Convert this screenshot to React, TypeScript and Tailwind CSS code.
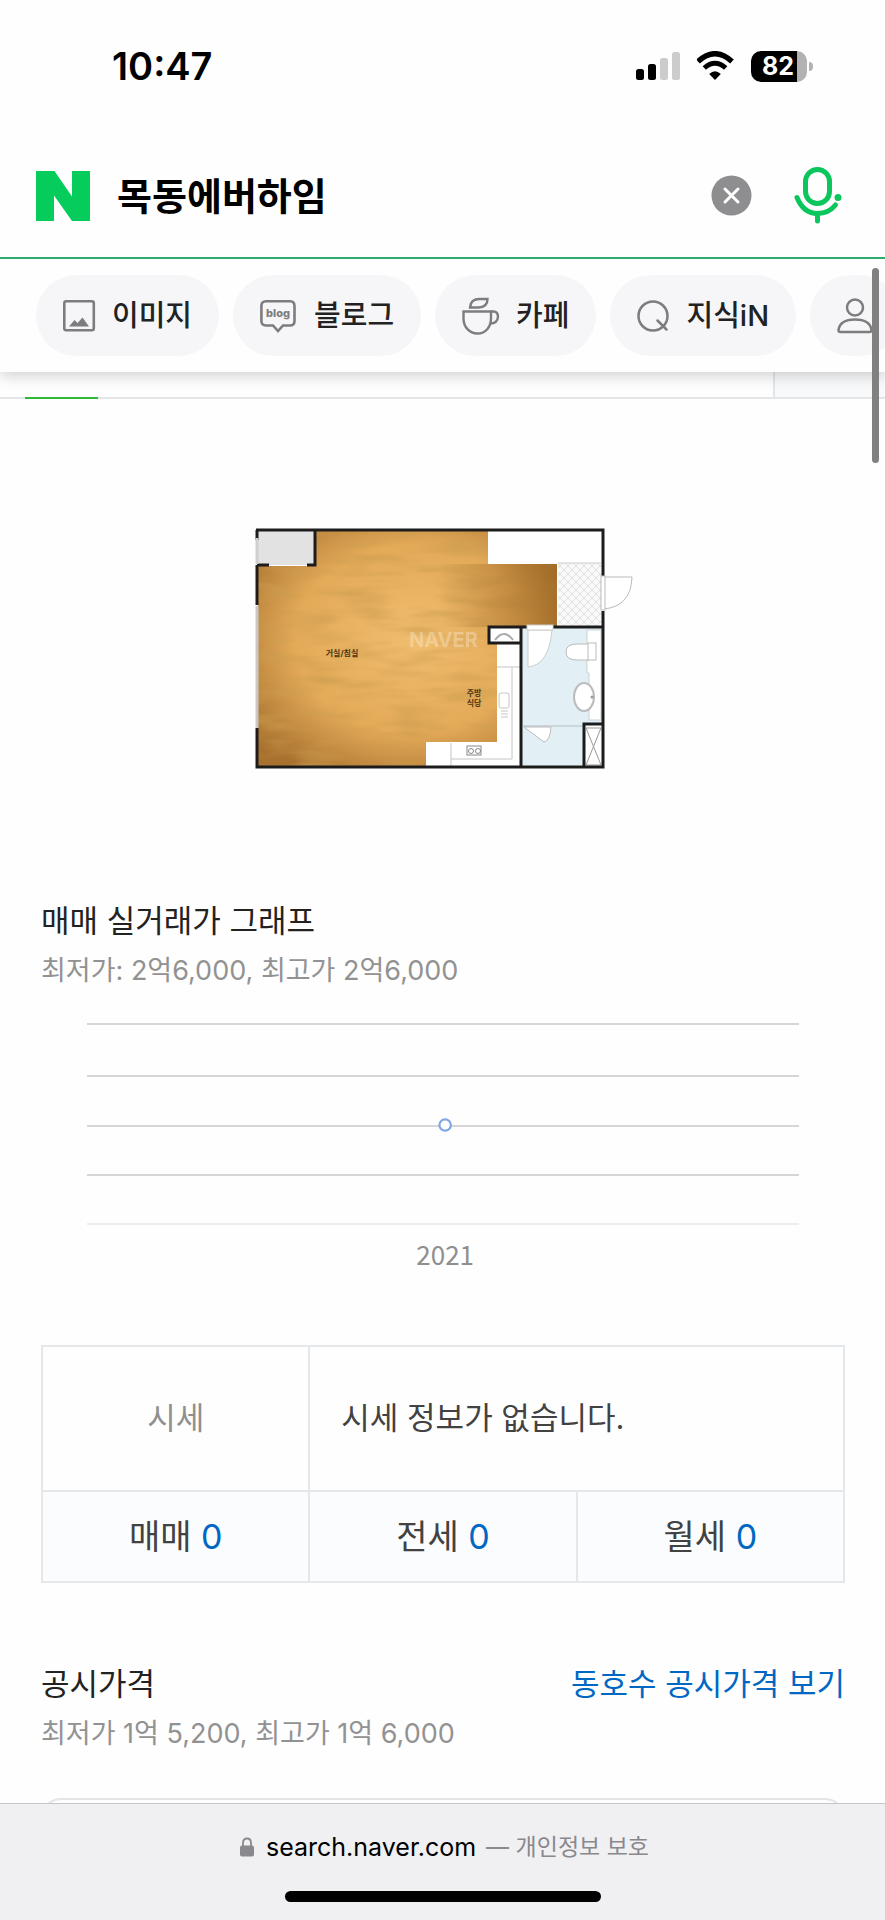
import type { ReactNode } from 'react'

const gridLines = [14, 66, 116, 165]

const deals = [
  { label: '매매', count: 0 },
  { label: '전세', count: 0 },
  { label: '월세', count: 0 },
]

const StatusBar = () => {
  return (
    <div className="flex h-[132px] items-center justify-between pr-[72px] pl-[112px]">
      <span className="text-[38px] leading-none font-semibold">10:47</span>
      <div className="flex items-center gap-4">
        <svg width="45" height="30" viewBox="0 0 45 30">
          <rect x="0" y="18" width="8" height="11" rx="2.5" />
          <rect x="12" y="13" width="8" height="16" rx="2.5" />
          <rect x="24" y="7" width="8" height="22" rx="2.5" fill="#cccccc" />
          <rect x="36" y="1" width="8" height="28" rx="2.5" fill="#cccccc" />
        </svg>
        <svg width="38" height="30" viewBox="0 0 38 30">
          <path d="M1 10.5Q18 -5 35 10.5" fill="none" stroke="#000" strokeWidth="5.4" />
          <path d="M7.3 17Q18 7.500 28.700 17" fill="none" stroke="#000" strokeWidth="5" />
          <path d="M18 29L12.200 23Q18 17.500 23.800 23Z" />
        </svg>
        <div className="flex items-center gap-0.5">
          <div className="flex h-[31px] w-14 rounded-[10px] bg-gradient-to-r from-black from-83% to-[#b2b2b2] to-83%">
            <span className="pl-[11px] text-[25px] leading-[31px] font-bold text-white">82</span>
          </div>
          <div className="h-[9px] w-1 rounded-r-full bg-[#b2b2b2]" />
        </div>
      </div>
    </div>
  )
}

const SearchRow = () => {
  return (
    <form className="flex h-[127px] items-center border-b-2 border-[#2bae6c] pt-0.5 pr-[41px] pl-9">
      <a href="#home" aria-label="NAVER">
        <svg width="54" height="50" viewBox="0 0 54 50">
          <path d="M0 0H18.500L36 25.500V0H54V50H36L18 24.500V50H0Z" fill="#06cc5b" />
        </svg>
      </a>
      <input
        type="text"
        aria-label="검색어"
        defaultValue="목동에버하임"
        className="ml-[27px] min-w-0 flex-1 bg-transparent text-[38px] leading-[56px] font-bold text-black outline-none"
      />
      <button type="button" aria-label="지우기">
        <svg width="41" height="41" viewBox="0 0 41 41">
          <circle cx="20.500" cy="20.500" r="20" fill="#8e8e91" />
          <path d="M14 14L27 27M27 14L14 27" stroke="#fff" strokeWidth="3" strokeLinecap="round" />
        </svg>
      </button>
      <button type="button" aria-label="음성 검색" className="ml-10">
        <svg width="52" height="60" viewBox="0 0 52 60" fill="none" stroke="#0bc65c" strokeWidth="5" strokeLinecap="round">
          <rect x="13.500" y="3.500" width="24" height="34" rx="12" />
          <path d="M5 31.500Q11.500 47.500 25.500 47.500Q36.500 47.500 43.500 39" />
          <path d="M25.500 48V55" />
          <circle cx="46" cy="31.500" r="3.500" fill="#0bc65c" stroke="none" />
        </svg>
      </button>
    </form>
  )
}

const ImageIcon = () => (
  <svg width="33" height="36" viewBox="0 0 33 36" fill="none">
    <rect x="1.300" y="3.300" width="29.500" height="29" rx="2" stroke="#7d7d7f" strokeWidth="2.600" />
    <path d="M6 28.500L11.500 22L14.500 25L19.500 19.500L26 28.500Z" fill="#7d7d7f" />
  </svg>
)

const BlogIcon = () => (
  <svg width="38" height="36" viewBox="0 0 38 36" fill="none">
    <path
      d="M6 3.300H30Q34.500 3.300 34.500 8V23Q34.500 27.500 30 27.500H23L18 33L13 27.500H6Q1.400 27.500 1.400 23V8Q1.400 3.300 6 3.300Z"
      stroke="#7d7d7f"
      strokeWidth="2.600"
    />
    <text x="18" y="19" textAnchor="middle" fontSize="11" fontWeight="800" fill="#7d7d7f">blog</text>
  </svg>
)

const CafeIcon = () => (
  <svg width="38" height="38" viewBox="0 0 38 38" fill="none" stroke="#7d7d7f" strokeWidth="2.400">
    <path d="M1.500 14.500H29V21.500C29 30 23.500 36.500 15.500 36.500S1.500 30 1.500 21.500Z" />
    <path d="M29 14.500H31.500Q36 14.500 36 20Q35.500 26.500 28 26.500" />
    <path d="M8 10.500Q8.500 1.800 18 2H25.500Q25.500 10.500 16.500 10.500Z" />
  </svg>
)

const KinIcon = () => (
  <svg width="33" height="36" viewBox="0 0 33 36" fill="none" stroke="#7d7d7f" strokeWidth="2.500" strokeLinecap="round">
    <ellipse cx="16" cy="18" rx="14.500" ry="14.500" />
    <path d="M20.500 22.500L29.500 31.500" />
  </svg>
)

const PersonIcon = () => (
  <svg width="36" height="38" viewBox="0 0 36 38" fill="none" stroke="#7d7d7f" strokeWidth="2.500">
    <circle cx="18" cy="10.500" r="8" />
    <path d="M1.500 33Q3 22.500 18 22.500T34.500 33Q34.500 35 32.500 35H3.500Q1.500 35 1.500 33Z" />
  </svg>
)

const Tab = ({ icon, label, children }: { icon: ReactNode; label?: string; children?: ReactNode }) => {
  return (
    <a
      href="#tab"
      aria-label={label}
      className="flex h-[81px] shrink-0 items-center gap-4 rounded-full bg-[#f6f6f9] px-[27px] text-[29px] font-medium whitespace-nowrap text-[#222]"
    >
      {icon}
      {children}
    </a>
  )
}

const FloorPlan = () => {
  return (
    <svg className="mx-auto mt-[111px] block" width="406" height="280" viewBox="0 0 406 280" role="img" aria-label="평면도">
      <defs>
        <radialGradient id="wood" cx="52%" cy="46%" r="66%">
          <stop offset="0" stopColor="#f0bd6e" />
          <stop offset="0.600" stopColor="#e3aa58" />
          <stop offset="1" stopColor="#a8712f" />
        </radialGradient>
        <linearGradient id="hall" x1="0" x2="1">
          <stop offset="0" stopColor="#95601f" stopOpacity="0" />
          <stop offset="1" stopColor="#95601f" stopOpacity="0.700" />
        </linearGradient>
        <filter id="grain" x="0" y="0" width="100%" height="100%">
          <feTurbulence type="fractalNoise" baseFrequency="0.02 0.09" numOctaves="2" seed="4" />
          <feColorMatrix values="0 0 0 0 0.600  0 0 0 0 0.340  0 0 0 0 0.080  2.400 0 0 0 -1" />
          <feComposite in2="SourceGraphic" operator="in" />
        </filter>
        <pattern id="tile" width="8" height="8" patternUnits="userSpaceOnUse">
          <rect width="8" height="8" fill="#f9f9f9" />
          <path d="M0 0L8 8M8 0L0 8" stroke="#e0e0e0" />
        </pattern>
      </defs>

      <rect x="18" y="20" width="344" height="237" fill="#fff" />
      <path d="M76 21H248V54H317V117H248V133H257V232H186V257H18V56H76Z" fill="url(#wood)" />
      <path d="M76 21H248V54H317V117H248V133H257V232H186V257H18V56H76Z" filter="url(#grain)" opacity="0.600" />
      <rect x="200" y="54" width="117" height="63" fill="url(#hall)" />

      {/* closet and entrance */}
      <rect x="18" y="21" width="56" height="34" fill="#e2e2e2" />
      <rect x="318" y="53" width="43" height="64" fill="url(#tile)" />
      <path d="M318 53H361" stroke="#ccc" />

      {/* bathroom */}
      <rect x="282" y="118" width="80" height="139" fill="#e2f0f5" />
      <path d="M347 120H361V210H349V163H347Z" fill="#fff" stroke="#c9d2d5" />
      <path d="M349 134H337Q326 134 326 142T337 150H349" fill="#fff" stroke="#bbb" />
      <rect x="348" y="133" width="8" height="17" fill="#fff" stroke="#bbb" />
      <ellipse cx="344" cy="187" rx="10" ry="14" fill="#fff" stroke="#bbb" strokeWidth="2" />
      <circle cx="352" cy="187" r="1.500" fill="#999" />
      <path d="M288 120H312Q309 155 288 157Z" fill="#fff" stroke="#ccc" />
      <path d="M283 216H343" stroke="#b5bec2" />
      <path d="M284 217L304 232Q310 231 311 217Z" fill="#fff" stroke="#bbb" />
      <rect x="344" y="214" width="18" height="42" fill="#fff" />
      <path d="M346 218H361L346 255H361Z" fill="none" stroke="#999" />

      {/* kitchen */}
      <g fill="none" stroke="#c4c4c4">
        <path d="M257 157H281M272 157V249H211M211 233V256" />
        <rect x="259" y="183" width="10" height="15" rx="2" />
        <path d="M261 201H268M261 204H268M261 207H268" />
      </g>
      <g fill="none" stroke="#888">
        <rect x="227" y="236" width="14" height="9" />
        <circle cx="231" cy="241" r="2.500" />
        <circle cx="238" cy="241" r="2.500" />
      </g>

      {/* walls */}
      <path d="M17 96V218" stroke="#c8c8c8" strokeWidth="3" />
      <g fill="none" stroke="#1c1c1c" strokeWidth="3">
        <path d="M17 95V55M16 20H363V66M363 101V257H17V218" />
        <path d="M17 55H29M67 55H75V20" />
        <path d="M17 20V30M281 118V257M288 117H249V133H281M313 117H363M363 214H344V257" />
      </g>
      <path d="M17 28V54" stroke="#d0d0d0" strokeWidth="3" />
      <path d="M255 130Q264 118 273 130" fill="none" stroke="#aaa" strokeWidth="2" />
      <rect x="287" y="115" width="26" height="5" fill="#fff" stroke="#ccc" />
      <path d="M363 67H392Q391 97 363 99" fill="#fff" stroke="#bbb" />
      <rect x="361" y="66" width="4" height="34" fill="#fff" stroke="#bbb" />

      <text x="169" y="137" fontSize="20" fontWeight="700" fill="#fff" opacity="0.280">NAVER</text>
      <text x="102" y="146" fontSize="8" fontWeight="700" textAnchor="middle" fill="#4a3413">거실/침실</text>
      <text x="234" y="186" fontSize="8" fontWeight="700" textAnchor="middle" fill="#4a3413">주방</text>
      <text x="234" y="196" fontSize="8" fontWeight="700" textAnchor="middle" fill="#4a3413">식당</text>
    </svg>
  )
}

const PriceChart = () => {
  return (
    <div className="mt-[19px] pr-[46px] pl-[46px]">
      <svg className="block h-[265px] w-full" role="img" aria-label="매매 실거래가">
        {gridLines.map((y) => (
          <line key={y} x1="0" x2="100%" y1={y} y2={y} stroke="#d6d6d6" strokeWidth="2" />
        ))}
        <line x1="0" x2="100%" y1="214" y2="214" stroke="#eeeeee" strokeWidth="2" />
        <circle cx="50.300%" cy="115" r="5.700" fill="#fff" stroke="#80a6e3" strokeWidth="2.200" />
        <text
          x="50.300%"
          y="255"
          textAnchor="middle"
          fill="#8f8f8f"
          className="font-['Noto_Sans_CJK_KR',sans-serif] text-[26px]"
        >
          2021
        </text>
      </svg>
    </div>
  )
}

const PriceTable = () => {
  return (
    <table className="mt-[70px] w-full table-fixed border-collapse text-[#424242]">
      <tbody>
        <tr className="h-[145px] text-[31px]">
          <th scope="row" className="border-2 border-[#e5e8ea] font-normal text-[#8f8f8f]">시세</th>
          <td colSpan={2} className="border-2 border-[#e5e8ea] px-[31px]">시세 정보가 없습니다.</td>
        </tr>
        <tr className="h-[91px] bg-[#fafcfe] text-[34px]">
          {deals.map(({ label, count }) => (
            <td key={label} className="border-2 border-[#e5e8ea] text-center">
              {label} <span className="text-[#0068c3]">{count}</span>
            </td>
          ))}
        </tr>
      </tbody>
    </table>
  )
}

const App = () => {
  return (
    <div className="relative flex min-h-screen flex-col overflow-hidden bg-[#fefefe] font-[Inter,'Noto_Sans_CJK_KR',sans-serif] text-black">
      <header className="relative z-10 bg-[#fefefe] shadow-[0_4px_14px_rgba(0,0,0,0.18)]">
        <StatusBar />
        <SearchRow />
        <nav className="flex gap-3.5 overflow-hidden py-4 pl-9">
          <Tab icon={<ImageIcon />}>이미지</Tab>
          <Tab icon={<BlogIcon />}>블로그</Tab>
          <Tab icon={<CafeIcon />}>카페</Tab>
          <Tab icon={<KinIcon />}>지식iN</Tab>
          <Tab icon={<PersonIcon />} label="인물" />
        </nav>
      </header>
      <div className="absolute top-[268px] right-1.5 z-20 h-[195px] w-[7px] rounded-full bg-[#808080]" />

      <div className="flex h-[27px] justify-between border-b-2 border-[#e3e5e7]">
        <div className="relative top-0.5 ml-[25px] w-[73px] border-b-2 border-[#2db93c]" />
        <div className="w-28 border-l-2 border-[#e3e5e7] bg-[#f7f9fb]" />
      </div>

      <main className="flex-1 pr-10 pl-[41px]">
        <FloorPlan />

        <section>
          <h2 className="mt-[109px] text-[31px] leading-[44px] text-[#222]">매매 실거래가 그래프</h2>
          <p className="mt-2 text-[27px] leading-10 text-[#929292]">최저가: 2억6,000, 최고가 2억6,000</p>
          <PriceChart />
          <PriceTable />
        </section>

        <section>
          <div className="mt-[79px] flex justify-between text-[31px] leading-[44px]">
            <h2 className="text-[#222]">공시가격</h2>
            <a href="#price" className="text-[#0068c3]">동호수 공시가격 보기</a>
          </div>
          <p className="mt-2 text-[27px] leading-10 text-[#929292]">최저가 1억 5,200, 최고가 1억 6,000</p>
          <div className="mt-11 h-[5px] overflow-hidden">
            <div className="h-20 rounded-[20px] border-2 border-[#e5e5e7]" />
          </div>
        </section>
      </main>

      <footer className="flex h-[117px] flex-col items-center justify-between border-t border-[#c6c6c9] bg-[#f0f0f3] pt-[25px] pb-[18px]">
        <div className="flex items-center pl-1 text-[25px] leading-9">
          <svg width="14" height="20" viewBox="0 0 14 20" className="mr-3">
            <path d="M3 10V6Q3 1.500 7 1.500T11 6V10" fill="none" stroke="#88888d" strokeWidth="1.800" />
            <rect x="0" y="8.500" width="14" height="11" rx="2" fill="#88888d" />
          </svg>
          <span>search.naver.com</span>
          <span className="ml-2.5 text-[23px] text-[#88888d]">— 개인정보 보호</span>
        </div>
        <div className="h-[11px] w-[316px] rounded-full bg-black" />
      </footer>
    </div>
  )
}

export default App
